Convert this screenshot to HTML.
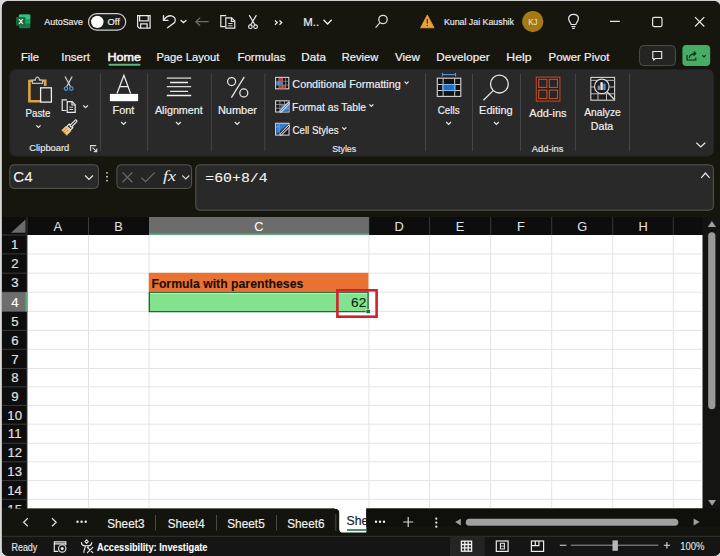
<!DOCTYPE html>
<html><head><meta charset="utf-8">
<style>
*{margin:0;padding:0}
html,body{width:720px;height:556px;overflow:hidden;background:#d9d9d9}
svg{position:absolute;left:0;top:0;display:block}
text{white-space:pre}
</style></head>
<body>
<svg width="720" height="556" viewBox="0 0 720 556">
<!-- window -->
<defs>
<clipPath id="win"><rect x="1.6" y="0.8" width="719" height="555.2" rx="7"/></clipPath>
<clipPath id="rowclip"><rect x="0" y="235" width="30" height="273.6"/></clipPath>
<clipPath id="tabclip"><rect x="339" y="500" width="27.3" height="40"/></clipPath>
</defs>
<rect x="0" y="0" width="720" height="556" fill="#dadada"/>
<g clip-path="url(#win)">
<rect x="1.6" y="0.8" width="740" height="570" fill="#16160f"/>
<!-- excel icon -->
<rect x="18.9" y="14.5" width="11.4" height="13.8" rx="1" fill="#107c41"/>
<rect x="18.9" y="14.5" width="11.4" height="4.6" rx="1" fill="#33c481"/>
<rect x="18.9" y="19" width="11.4" height="4.6" fill="#21a366"/>
<rect x="16.1" y="16.9" width="9.3" height="8.8" rx="1.2" fill="#1a6a3e"/>
<path d="M19 19 L22.8 24 M22.8 19 L19 24" stroke="#fff" stroke-width="1.2"/>
<!-- toggle -->
<rect x="88.5" y="13.7" width="37.2" height="16.4" rx="8.2" fill="#1b1b18" stroke="#d0d0d0" stroke-width="1.2"/>
<circle cx="97.3" cy="21.9" r="6.2" fill="#fff"/>
<!-- save -->
<g fill="none" stroke="#e8e8e8" stroke-width="1.25">
<path d="M137.6 15.6 H150.1 V28.1 H139.2 L137.6 26.5 Z"/>
<path d="M139.6 15.6 V20.8 H148.2 V15.6"/>
<path d="M140.6 28.1 V23.8 H147.1 V28.1"/>
</g>
<!-- undo -->
<g fill="none" stroke="#e8e8e8" stroke-width="1.3" stroke-linecap="round">
<path d="M163.5 15.6 V20.4 H168"/>
<path d="M163.8 20.2 C166 16.5 169 15.5 171.5 15.8 C174.5 16.3 176.5 19.5 174.6 22.6 L167.6 27.8"/>
<path d="M181 20.4 L183.5 22.6 L186 20.4"/>
</g>
<!-- back arrow -->
<path d="M208.7 21.7 H195.8 M200.2 17.6 L195.8 21.7 L200.2 25.8" fill="none" stroke="#6d6d68" stroke-width="1.2"/>
<!-- copy -->
<g fill="none" stroke="#e8e8e8" stroke-width="1.2">
<path d="M226.2 15.6 H220.8 V26.6 H225.4"/>
<path d="M225.8 17.8 H231.6 L234.8 21 V28.2 H225.8 Z"/>
<path d="M231.4 17.8 V21.3 H234.8"/>
<path d="M228.2 23.5 H232.6 M228.2 25.8 H232.6" stroke-width="0.9"/>
</g>
<!-- scissors -->
<g fill="none" stroke="#e8e8e8" stroke-width="1.2">
<path d="M249.2 15.1 L255 25 M256.4 15.1 L250.6 25"/>
<circle cx="250.4" cy="26.7" r="1.8"/><circle cx="255.6" cy="26.7" r="1.8"/>
</g>
<!-- >> -->
<path d="M275 20.5 L277.2 22.6 L275 24.7 M279.5 20.5 L281.7 22.6 L279.5 24.7" fill="none" stroke="#f0f0f0" stroke-width="1.3"/>
<!-- M.. chevron -->
<path d="M323.5 19.8 L327.6 24 L331.7 19.8" fill="none" stroke="#f0f0f0" stroke-width="1.3"/>
<!-- search -->
<g fill="none" stroke="#dcdcdc" stroke-width="1.25">
<circle cx="383" cy="19.5" r="4.2"/><path d="M380 22.6 L375.6 27.6"/>
</g>
<!-- warning -->
<path d="M427.3 14.9 L434.1 27.8 H420.6 Z" fill="#e9a23b" stroke="#e9a23b" stroke-width="0.8" stroke-linejoin="round"/>
<path d="M427.3 19 V23.6 M427.3 25 V26" stroke="#3b2a10" stroke-width="1.2"/>
<!-- avatar -->
<circle cx="532.8" cy="21.6" r="10.6" fill="#a57a14"/>
<!-- bulb -->
<g fill="none" stroke="#e8e8e8" stroke-width="1.2">
<path d="M571.2 24.5 C571 22.5 568.6 21.6 568.6 18.6 C568.6 15.8 570.8 14.4 573.5 14.4 C576.2 14.4 578.4 15.8 578.4 18.6 C578.4 21.6 576 22.5 575.8 24.5 Z"/>
<path d="M571.4 26.5 H575.6 M572.2 28.4 H574.8"/>
</g>
<!-- window controls -->
<path d="M610 21.3 H619.8" stroke="#e8e8e8" stroke-width="1.2"/>
<rect x="652.6" y="17.4" width="9.4" height="9.2" rx="1.5" fill="none" stroke="#e8e8e8" stroke-width="1.2"/>
<path d="M695 17.2 L704.3 26.5 M704.3 17.2 L695 26.5" stroke="#e8e8e8" stroke-width="1.2"/>
<!-- tabs underline -->
<rect x="108.5" y="63.7" width="32" height="2" rx="1" fill="#5bb77a"/>
<!-- comment / share -->
<rect x="639.6" y="45.6" width="35.8" height="20" rx="4" fill="#242422" stroke="#4e4e4a" stroke-width="1"/>
<path d="M652.8 51.5 H661.7 V58.5 H655.6 L653.6 60 V58.5 H652.8 Z" fill="none" stroke="#e8e8e8" stroke-width="1.1"/>
<rect x="682.4" y="45.1" width="27.8" height="20.8" rx="4" fill="#45ad66"/>
<g fill="none" stroke="#0f2a17" stroke-width="1.2">
<path d="M687 55 V60 H695.8 V57.5"/>
<path d="M689.3 58 C689.6 54.8 691.5 53.6 695.6 53.6 M693.6 51.5 L695.8 53.6 L693.6 55.7"/>
<path d="M702.3 55.2 L704 56.9 L705.7 55.2"/>
</g>
<!-- ribbon panel -->
<rect x="9.6" y="69.3" width="704.2" height="86.9" rx="6" fill="#292929" stroke="#202020" stroke-width="0.6"/>
<g stroke="#454545" stroke-width="1">
<path d="M100.5 73.5 V151 M147.5 73.5 V151 M211.3 73.5 V151 M264.8 73.5 V151 M425.5 73.5 V151 M472.5 73.5 V151 M520.5 73.5 V151 M575.4 73.5 V151 M629.5 73.5 V151"/>
</g>
<!-- paste icon -->
<path d="M30 80.8 H45.2 V86 M29.4 79.8 V101.3 H40" fill="none" stroke="#e3a23c" stroke-width="2.6"/>
<path d="M32.4 83.4 V81.2 Q32.4 80.2 33.4 80.2 H35.3 Q35.6 77.2 37.4 77.2 Q39.2 77.2 39.5 80.2 H41.6 Q42.6 80.2 42.6 81.2 V83.4 Z" fill="#2a2a2a" stroke="#bdbdbd" stroke-width="1.2"/>
<rect x="40.6" y="87.8" width="10.8" height="14.3" fill="#2a2a2a" stroke="#ececec" stroke-width="1.3"/>
<!-- scissors ribbon -->
<g fill="none" stroke-width="1.2">
<path d="M65 76.5 L70.6 86.8 M72.2 76.5 L66.6 86.8" stroke="#d8d8d8"/>
<circle cx="66" cy="88.6" r="1.7" stroke="#4a97db"/><circle cx="71.3" cy="88.6" r="1.7" stroke="#4a97db"/>
</g>
<!-- copy ribbon -->
<g fill="none" stroke="#e8e8e8" stroke-width="1.2">
<path d="M67 99.8 H62.2 V110.5 H66.4"/>
<path d="M67.2 101.7 H72.2 L75.2 104.7 V112.4 H67.2 Z"/>
<path d="M72 101.7 V105 H75.2"/>
<path d="M69.4 107.2 H73 M69.4 109.5 H73" stroke-width="0.9"/>
</g>
<path d="M83.3 105.3 L85.6 107.6 L87.9 105.3" fill="none" stroke="#e8e8e8" stroke-width="1.2"/>
<!-- format painter -->
<g transform="translate(0.6 -0.9)">
<path d="M61.2 131.2 L65.4 127 L70.4 132 L66.2 136.2 Z" fill="#f2c886" stroke="#e3a23c" stroke-width="1"/>
<path d="M62.6 132.6 L66 129.2 M64.2 134.2 L67.6 130.8" stroke="#b57a26" stroke-width="0.8"/>
<path d="M66.3 127.2 L68.6 124.9 L72.3 128.6 L70 130.9 Z" fill="#292929" stroke="#ececec" stroke-width="1.1"/>
<path d="M70.6 126.6 L75.2 122" stroke="#ececec" stroke-width="3.4" stroke-linecap="round"/>
<path d="M70.6 126.6 L75.2 122" stroke="#292929" stroke-width="1.1" stroke-linecap="round"/>
</g>
<!-- paste chevron -->
<path d="M36.2 125.3 L38.4 127.5 L40.6 125.3" fill="none" stroke="#e8e8e8" stroke-width="1.2"/>
<!-- dialog launcher -->
<path d="M90.6 151 V145.6 H96.2 M92.6 147.6 L96.8 151.6 M93.8 151.6 H96.8 V148.6" fill="none" stroke="#d8d8d8" stroke-width="1.1"/>
<!-- font icon -->
<path d="M117 93.5 L123.9 75.3 L130.6 93.5 M120 86.7 H127.8" fill="none" stroke="#ececec" stroke-width="1.25"/>
<rect x="109.9" y="93.9" width="28.2" height="7.3" fill="#fdfdfd"/>
<!-- alignment -->
<g stroke-width="1.3">
<path d="M166.8 78.1 H191.2" stroke="#a8a8a8" stroke-width="1.9"/>
<path d="M170.1 82.5 H188" stroke="#f0f0f0"/>
<path d="M166.8 86.7 H191.2" stroke="#d8d8d8"/>
<path d="M170.1 91.4 H188" stroke="#e8e8e8"/>
<path d="M166.8 95.5 H191.2" stroke="#f0f0f0"/>
</g>
<!-- percent -->
<g fill="none" stroke="#e8e8e8" stroke-width="1.25">
<circle cx="231.6" cy="81.6" r="4"/><circle cx="243.8" cy="92.9" r="4"/>
<path d="M244.3 76.9 L231.4 97.6"/>
</g>
<!-- chevrons under font/alignment/number/cells/editing -->
<g fill="none" stroke="#e8e8e8" stroke-width="1.2">
<path d="M121.2 122 L123.6 124.4 L126 122"/>
<path d="M176 122 L178.4 124.4 L180.8 122"/>
<path d="M234.8 122 L237.2 124.4 L239.6 122"/>
<path d="M446.2 122 L448.6 124.4 L451 122"/>
<path d="M494 122 L496.4 124.4 L498.8 122"/>
<path d="M404.6 81.6 L406.6 83.6 L408.6 81.6"/>
<path d="M369.4 104.4 L371.4 106.4 L373.4 104.4"/>
<path d="M342.3 127.4 L344.3 129.4 L346.3 127.4"/>
<path d="M696.4 142.8 L700.8 147 L705.2 142.8"/>
</g>
<!-- conditional formatting icon -->
<rect x="275.6" y="77.4" width="13.2" height="11.4" fill="#141414" stroke="#d4d4d4" stroke-width="1.1"/>
<rect x="279" y="78" width="3.4" height="3.1" fill="#e03030"/>
<rect x="276.2" y="81.6" width="6.2" height="3.2" fill="#3b86d6"/>
<rect x="279" y="85.3" width="6.6" height="3" fill="#e02828"/>
<path d="M275.6 81.3 H288.8 M275.6 85 H288.8 M278.9 77.4 V88.8 M282.3 77.4 V88.8 M285.6 77.4 V88.8" stroke="#9a9a9a" stroke-width="0.7"/>
<!-- format as table icon -->
<rect x="275.6" y="100.8" width="13.4" height="11.2" fill="#161616" stroke="#d4d4d4" stroke-width="1.1"/>
<path d="M280.2 104.4 H288.5 V111.5 H283.6 Z" fill="#2f7ed8"/>
<path d="M275.6 104.4 H289 M275.6 108.2 H289 M279.9 100.8 V112 M284.5 100.8 V104.4" stroke="#a8a8a8" stroke-width="0.8"/>
<path d="M280.8 111.2 L288.4 103.6" stroke="#eeeeee" stroke-width="2.8" stroke-linecap="round"/>
<path d="M280.8 111.2 L288.4 103.6" stroke="#2f7ed8" stroke-width="1.1" stroke-linecap="round"/>
<!-- cell styles icon -->
<rect x="275.6" y="123.3" width="13.4" height="11.8" fill="#161616" stroke="#d4d4d4" stroke-width="1.1"/>
<path d="M276.2 123.9 H288.4 L276.2 134.5 Z" fill="#2f7ed8"/>
<path d="M279.2 123.3 V135.1 M275.6 126.8 H279.2" stroke="#8aa8c8" stroke-width="0.8"/>
<path d="M281 134.2 L288.5 126.6" stroke="#eeeeee" stroke-width="2.8" stroke-linecap="round"/>
<path d="M281 134.2 L288.5 126.6" stroke="#1b1b1b" stroke-width="1.1" stroke-linecap="round"/>
<!-- cells icon -->
<rect x="437.3" y="78.2" width="23.5" height="18.2" fill="#121212" stroke="#d8d8d8" stroke-width="1.1"/>
<rect x="443.1" y="84.5" width="11.6" height="6" fill="#1d6fc4" stroke="#77b8ef" stroke-width="1"/>
<path d="M443.1 78.2 V96.4 M454.7 78.2 V96.4 M437.3 84.5 H460.8 M437.3 90.5 H460.8" stroke="#c8c8c8" stroke-width="1"/>
<rect x="443.1" y="84.5" width="11.6" height="6" fill="#1d6fc4" stroke="#77b8ef" stroke-width="1"/>
<path d="M442.4 74.6 H455.6 M442.4 72.8 V76.4 M455.6 72.8 V76.4" stroke="#5aa3e6" stroke-width="1"/>
<!-- editing magnifier -->
<g fill="none" stroke="#e4e4e4" stroke-width="1.3">
<circle cx="499.4" cy="84.1" r="8.9"/>
<path d="M493.2 90.6 L483.4 100.2"/>
</g>
<!-- add-ins icon -->
<rect x="536.3" y="77.1" width="23.6" height="24" fill="#2e1a14" stroke="#b94c28" stroke-width="1.1"/>
<rect x="538.7" y="79.3" width="8.2" height="8.1" fill="#25252b" stroke="#c2542d" stroke-width="1.1"/>
<rect x="549.3" y="79.3" width="8.2" height="8.1" fill="#25252b" stroke="#c2542d" stroke-width="1.1"/>
<rect x="538.7" y="90.1" width="8.2" height="8.5" fill="#25252b" stroke="#c2542d" stroke-width="1.1"/>
<rect x="549.3" y="90.1" width="8.2" height="8.5" fill="#25252b" stroke="#c2542d" stroke-width="1.1"/>
<!-- analyze data icon -->
<rect x="590.8" y="77.4" width="23.8" height="22.8" fill="#1c1c1c" stroke="#d4d4d4" stroke-width="1.1"/>
<path d="M590.8 80.3 H614.6 M590.8 93.8 H614.6 M598 93.8 V100.2 M606.5 93.8 V100.2 M590.8 87 H594 M609.6 87 H614.6" stroke="#bdbdbd" stroke-width="1"/>
<circle cx="601.8" cy="86.4" r="7.3" fill="#1c1c1c" stroke="#dadada" stroke-width="1.2"/>
<path d="M607 91.8 L614.6 99.8" stroke="#dadada" stroke-width="1.3"/>
<rect x="597.6" y="85.6" width="2.4" height="4.4" fill="#8c8c8c"/>
<rect x="600.4" y="82.2" width="2.4" height="7.8" fill="#ececec"/>
<rect x="603.2" y="83.6" width="2.4" height="6.4" fill="#3f95e6"/>
<!-- formula bar -->
<rect x="9.8" y="164.8" width="88.6" height="23.6" rx="4" fill="#292929" stroke="#575753" stroke-width="1"/>
<path d="M85.1 175.5 L89 179.4 L92.9 175.5" fill="none" stroke="#e8e8e8" stroke-width="1.2"/>
<g fill="#d8d8d8"><circle cx="107" cy="172.8" r="0.9"/><circle cx="107" cy="176.7" r="0.9"/><circle cx="107" cy="180.6" r="0.9"/></g>
<rect x="116.9" y="164.8" width="74.7" height="23.6" rx="4" fill="#252525" stroke="#575753" stroke-width="1"/>
<path d="M122.5 172.4 L132.4 182.2 M132.4 172.4 L122.5 182.2" stroke="#6c6c6c" stroke-width="1.2"/>
<path d="M141.4 177.6 L145.6 181.6 L154.8 172.4" fill="none" stroke="#6c6c6c" stroke-width="1.2"/>
<path d="M182.3 175.5 L185.8 179 L189.3 175.5" fill="none" stroke="#d8d8d8" stroke-width="1.1"/>
<rect x="195.8" y="164.8" width="517.6" height="45.4" rx="4" fill="#292929" stroke="#575753" stroke-width="1"/>
<path d="M701.2 177.8 L705.4 173 L709.6 177.8" fill="none" stroke="#e8e8e8" stroke-width="1.2"/>
<!-- grid -->
<rect x="2" y="217" width="701" height="18" fill="#0d0d0d"/>
<rect x="2" y="235" width="25" height="273.6" fill="#0d0d0d"/>
<rect x="27" y="235" width="675.7" height="273.6" fill="#ffffff"/>
<g stroke="#e4e4e4" stroke-width="1">
<path d="M27 253.9 H702.7 M27 273.2 H702.7 M27 292.2 H702.7 M27 311.4 H702.7 M27 330.4 H702.7 M27 349.3 H702.7 M27 368.5 H702.7 M27 386.8 H702.7 M27 405.4 H702.7 M27 424.2 H702.7 M27 443.3 H702.7 M27 461.8 H702.7 M27 480.6 H702.7 M27 499.4 H702.7"/>
<path d="M88.5 235 V508.6 M149 235 V508.6 M368.9 235 V508.6 M429.6 235 V508.6 M490.7 235 V508.6 M551.7 235 V508.6 M612.7 235 V508.6 M673.3 235 V508.6"/>
</g>
<g stroke="#3a3a3a" stroke-width="1">
<path d="M88.5 217 V235 M368.9 217 V235 M429.6 217 V235 M490.7 217 V235 M551.7 217 V235 M612.7 217 V235 M673.3 217 V235"/>
<path d="M27 217 V508.6"/>
<path d="M2 235 H27 M2 253.9 H27 M2 273.2 H27 M2 292.2 H27 M2 311.4 H27 M2 330.4 H27 M2 349.3 H27 M2 368.5 H27 M2 386.8 H27 M2 405.4 H27 M2 424.2 H27 M2 443.3 H27 M2 461.8 H27 M2 480.6 H27 M2 499.4 H27"/>
</g>
<!-- select all triangle -->
<path d="M11 232.8 L25.5 219.4 V232.8 Z" fill="#6b6b6b"/>
<!-- selected headers -->
<rect x="149" y="217" width="219.9" height="18" fill="#6c6c6c"/>
<rect x="149" y="233.4" width="219.9" height="1.6" fill="#5aa97a"/>
<rect x="2" y="292.2" width="25" height="19.2" fill="#6e6e6e"/>
<rect x="25.4" y="292.2" width="1.6" height="19.2" fill="#5aa97a"/>
<!-- cells -->
<rect x="148.8" y="272.8" width="219.6" height="19" fill="#e97132"/>
<rect x="148.8" y="291.8" width="219.6" height="20.2" fill="#83e28e"/>
<rect x="149.3" y="292.3" width="218.8" height="19.4" fill="none" stroke="#1e4a2c" stroke-width="1.1"/>
<path d="M150.3 293.4 H367.2" stroke="#c9f2cd" stroke-width="0.9"/>
<rect x="366" y="309.4" width="4.4" height="4" fill="#1f6b3c" stroke="#fff" stroke-width="0.6"/>
<rect x="337.4" y="290.3" width="39.2" height="26.4" fill="none" stroke="#d2212b" stroke-width="2.6"/>
<!-- vertical scrollbar -->
<rect x="702.7" y="217" width="20" height="291.9" fill="#141413"/>
<path d="M707.8 227 L711.9 221 L716 227 Z" fill="#a0a0a0"/>
<rect x="708.2" y="232.2" width="7.2" height="177" rx="3.6" fill="#9a9a9a"/>
<path d="M708.2 500.1 L712.1 505.8 L716 500.1 Z" fill="#a0a0a0"/>
<!-- tab bar -->
<rect x="2" y="508.6" width="740" height="28" fill="#14140f"/>
<path d="M334.6 508 H366.3 V532.6 H343.4 Q339.2 532.6 339.2 528.4 V512.8 Q339.2 508.7 334.6 508.7 Z" fill="#ffffff"/>
<rect x="347" y="529.2" width="19.3" height="1.6" fill="#217346"/>
<rect x="366.3" y="508.7" width="380" height="18" fill="#0f0f0c"/>
<g fill="none" stroke="#e0e0e0" stroke-width="1.2">
<path d="M27.8 518.2 L23.6 522.2 L27.8 526.2"/>
<path d="M52 518.2 L56.2 522.2 L52 526.2"/>
</g>
<g fill="#e8e8e8"><circle cx="77.5" cy="521.8" r="1.2"/><circle cx="81.6" cy="521.8" r="1.2"/><circle cx="85.7" cy="521.8" r="1.2"/>
<circle cx="376" cy="521.7" r="1.2"/><circle cx="380" cy="521.7" r="1.2"/><circle cx="384" cy="521.7" r="1.2"/>
<circle cx="436.3" cy="518.7" r="1.1"/><circle cx="436.3" cy="522.7" r="1.1"/><circle cx="436.3" cy="526.7" r="1.1"/></g>
<path d="M408.2 517 V527 M403.2 522 H413.2" stroke="#d8d8d8" stroke-width="1.2"/>
<g stroke="#4a4a46" stroke-width="1">
<path d="M155.5 515 V530.4 M216.5 515 V530.4 M276.5 515 V530.4 M335.8 514 V530.8"/>
</g>
<path d="M460.8 518.8 L455.2 522.1 L460.8 525.4 Z" fill="#a0a0a0"/>
<rect x="465.8" y="518.8" width="212.5" height="7" rx="3.5" fill="#a0a0a0"/>
<path d="M693.6 518.6 L699.6 522.1 L693.6 525.6 Z" fill="#a0a0a0"/>
<!-- status bar -->
<rect x="2" y="536.2" width="740" height="30" fill="#151515"/>
<rect x="2" y="535.8" width="740" height="1.2" fill="#2c2c28"/>
<g fill="none" stroke="#e8e8e8" stroke-width="1.15">
<path d="M58.2 551.4 H54.3 V541.9 H65.8 V545.2 M54.3 543.9 H65.8"/>
<circle cx="62.2" cy="548.4" r="3.7"/>
</g>
<circle cx="62.2" cy="548.4" r="1.5" fill="#e8e8e8"/>
<g fill="none" stroke="#e8e8e8" stroke-width="1.15" stroke-linecap="round" stroke-linejoin="round">
<path d="M86.6 539.9 L88.3 541.6 L86.6 543.3 L84.9 541.6 Z"/>
<path d="M81.4 542.6 Q81.8 545.9 85 545.7 H88.2 Q91.4 545.9 91.8 542.6"/>
<path d="M85.2 545.9 C85.6 548.6 83.4 549.8 83.9 552.4 M88 545.9 L88.2 547.6"/>
<path d="M87.4 547.4 L92.8 552.6 M92.8 547.4 L87.4 552.6"/>
</g>
<rect x="450" y="536.8" width="34.6" height="20" fill="#242424"/>
<g fill="none" stroke="#f0f0f0" stroke-width="1.3">
<rect x="461.4" y="541.2" width="10.2" height="10"/>
<path d="M464.8 541.2 V551.2 M468.2 541.2 V551.2 M461.4 544.5 H471.6 M461.4 547.9 H471.6"/>
</g>
<g fill="none" stroke="#ececec" stroke-width="1.2">
<rect x="496.3" y="541" width="11.8" height="10.4"/>
<rect x="500.4" y="543.3" width="4" height="5.6" stroke-width="1"/>
<path d="M500.4 546.1 H504.4" stroke-width="0.8"/>
<rect x="531.4" y="541" width="12.2" height="10.4"/>
<path d="M531.4 545.6 H538.9 V541 M535.3 541 V545.6"/>
</g>
<g fill="none" stroke="#e0e0e0" stroke-width="1.1">
<path d="M559.8 545.2 H566.4 M663.8 545.2 H670 M666.9 542 V548.4"/>
</g>
<path d="M570.8 545.2 H658.3" stroke="#9a9a9a" stroke-width="1"/>
<rect x="612.5" y="540.4" width="5.4" height="10.4" fill="#b8b8b8"/>
<g><text transform="translate(44.36 25.25) scale(0.996 1)" style='font-family:"Liberation Sans";font-size:8.93px;font-weight:normal;' fill="#e8e8e8" stroke="#e8e8e8" stroke-width="0.18">AutoSave</text></g>
<g><text transform="translate(107.48 25.00) scale(1.082 1)" style='font-family:"Liberation Sans";font-size:8.62px;font-weight:normal;' fill="#f0f0f0" stroke="#f0f0f0" stroke-width="0.18">Off</text></g>
<g><text transform="translate(303.29 25.60) scale(1.077 1)" style='font-family:"Liberation Sans";font-size:10.58px;font-weight:normal;' fill="#f0f0f0" stroke="#f0f0f0" stroke-width="0.18">M..</text></g>
<g><text transform="translate(443.89 25.30) scale(0.956 1)" style='font-family:"Liberation Sans";font-size:9.24px;font-weight:normal;' fill="#e8e8e8" stroke="#e8e8e8" stroke-width="0.18">Kunal Jai Kaushik</text></g>
<g><text transform="translate(528.27 25.00) scale(0.892 1)" style='font-family:"Liberation Sans";font-size:8.84px;font-weight:normal;' fill="#f5e8c8" stroke="#f5e8c8" stroke-width="0">KJ</text></g>
<g><text transform="translate(21.01 60.90) scale(1.039 1)" style='font-family:"Liberation Sans";font-size:10.76px;font-weight:normal;' fill="#f2f2f2" stroke="#f2f2f2" stroke-width="0.18">File</text></g>
<g><text transform="translate(61.27 60.90) scale(1.015 1)" style='font-family:"Liberation Sans";font-size:11.30px;font-weight:normal;' fill="#f2f2f2" stroke="#f2f2f2" stroke-width="0.18">Insert</text></g>
<g><text transform="translate(107.49 60.90) scale(1.112 1)" style='font-family:"Liberation Sans";font-size:11.30px;font-weight:normal;' fill="#f2f2f2" stroke="#f2f2f2" stroke-width="0.55">Home</text></g>
<g><text transform="translate(156.40 60.90) scale(0.992 1)" style='font-family:"Liberation Sans";font-size:11.30px;font-weight:normal;' fill="#f2f2f2" stroke="#f2f2f2" stroke-width="0.18">Page Layout</text></g>
<g><text transform="translate(237.38 60.90) scale(1.072 1)" style='font-family:"Liberation Sans";font-size:10.76px;font-weight:normal;' fill="#f2f2f2" stroke="#f2f2f2" stroke-width="0.18">Formulas</text></g>
<g><text transform="translate(301.37 60.90) scale(1.030 1)" style='font-family:"Liberation Sans";font-size:11.30px;font-weight:normal;' fill="#f2f2f2" stroke="#f2f2f2" stroke-width="0.18">Data</text></g>
<g><text transform="translate(341.81 60.90) scale(1.034 1)" style='font-family:"Liberation Sans";font-size:10.76px;font-weight:normal;' fill="#f2f2f2" stroke="#f2f2f2" stroke-width="0.18">Review</text></g>
<g><text transform="translate(394.94 60.90) scale(1.083 1)" style='font-family:"Liberation Sans";font-size:10.76px;font-weight:normal;' fill="#f2f2f2" stroke="#f2f2f2" stroke-width="0.18">View</text></g>
<g><text transform="translate(436.37 60.90) scale(1.084 1)" style='font-family:"Liberation Sans";font-size:10.76px;font-weight:normal;' fill="#f2f2f2" stroke="#f2f2f2" stroke-width="0.18">Developer</text></g>
<g><text transform="translate(506.32 60.90) scale(1.138 1)" style='font-family:"Liberation Sans";font-size:10.76px;font-weight:normal;' fill="#f2f2f2" stroke="#f2f2f2" stroke-width="0.18">Help</text></g>
<g><text transform="translate(548.59 60.90) scale(1.062 1)" style='font-family:"Liberation Sans";font-size:10.76px;font-weight:normal;' fill="#f2f2f2" stroke="#f2f2f2" stroke-width="0.18">Power Pivot</text></g>
<g><text transform="translate(25.62 117.00) scale(0.929 1)" style='font-family:"Liberation Sans";font-size:10.43px;font-weight:normal;' fill="#f0f0f0" stroke="#f0f0f0" stroke-width="0.18">Paste</text></g>
<g><text transform="translate(29.28 151.25) scale(0.991 1)" style='font-family:"Liberation Sans";font-size:9.45px;font-weight:normal;' fill="#e6e6e6" stroke="#e6e6e6" stroke-width="0.18">Clipboard</text></g>
<g><text transform="translate(112.53 114.00) scale(1.032 1)" style='font-family:"Liberation Sans";font-size:10.58px;font-weight:normal;' fill="#f0f0f0" stroke="#f0f0f0" stroke-width="0.18">Font</text></g>
<g><text transform="translate(154.95 114.00) scale(1.070 1)" style='font-family:"Liberation Sans";font-size:10.07px;font-weight:normal;' fill="#f0f0f0" stroke="#f0f0f0" stroke-width="0.18">Alignment</text></g>
<g><text transform="translate(217.92 114.00) scale(1.091 1)" style='font-family:"Liberation Sans";font-size:10.07px;font-weight:normal;' fill="#f0f0f0" stroke="#f0f0f0" stroke-width="0.18">Number</text></g>
<g><text transform="translate(292.36 87.60) scale(0.942 1)" style='font-family:"Liberation Sans";font-size:11.45px;font-weight:normal;' fill="#f0f0f0" stroke="#f0f0f0" stroke-width="0.18">Conditional Formatting</text></g>
<g><text transform="translate(292.07 110.50) scale(0.904 1)" style='font-family:"Liberation Sans";font-size:11.45px;font-weight:normal;' fill="#f0f0f0" stroke="#f0f0f0" stroke-width="0.18">Format as Table</text></g>
<g><text transform="translate(292.41 133.50) scale(0.844 1)" style='font-family:"Liberation Sans";font-size:11.59px;font-weight:normal;' fill="#f0f0f0" stroke="#f0f0f0" stroke-width="0.18">Cell Styles</text></g>
<g><text transform="translate(332.20 151.90) scale(0.912 1)" style='font-family:"Liberation Sans";font-size:9.66px;font-weight:normal;' fill="#e6e6e6" stroke="#e6e6e6" stroke-width="0.18">Styles</text></g>
<g><text transform="translate(437.81 114.40) scale(0.946 1)" style='font-family:"Liberation Sans";font-size:10.34px;font-weight:normal;' fill="#f0f0f0" stroke="#f0f0f0" stroke-width="0.18">Cells</text></g>
<g><text transform="translate(479.12 114.40) scale(1.061 1)" style='font-family:"Liberation Sans";font-size:10.34px;font-weight:normal;' fill="#f0f0f0" stroke="#f0f0f0" stroke-width="0.18">Editing</text></g>
<g><text transform="translate(529.35 116.70) scale(1.018 1)" style='font-family:"Liberation Sans";font-size:10.76px;font-weight:normal;' fill="#f0f0f0" stroke="#f0f0f0" stroke-width="0.18">Add-ins</text></g>
<g><text transform="translate(531.85 151.50) scale(1.008 1)" style='font-family:"Liberation Sans";font-size:9.24px;font-weight:normal;' fill="#e6e6e6" stroke="#e6e6e6" stroke-width="0.18">Add-ins</text></g>
<g><text transform="translate(584.15 115.80) scale(0.997 1)" style='font-family:"Liberation Sans";font-size:10.34px;font-weight:normal;' fill="#f0f0f0" stroke="#f0f0f0" stroke-width="0.18">Analyze</text></g>
<g><text transform="translate(590.85 129.60) scale(1.032 1)" style='font-family:"Liberation Sans";font-size:10.29px;font-weight:normal;' fill="#f0f0f0" stroke="#f0f0f0" stroke-width="0.18">Data</text></g>
<g><text transform="translate(13.14 182.00) scale(1.026 1)" style='font-family:"Liberation Sans";font-size:14.86px;font-weight:normal;' fill="#f4f4f4" stroke="#f4f4f4" stroke-width="0.05">C4</text></g>
<g><text transform="translate(163.02 180.70) scale(1.208 1)" style='font-family:"Liberation Serif";font-size:15.04px;font-weight:normal;font-style:italic;' fill="#f0f0f0" stroke="#f0f0f0" stroke-width="0">fx</text></g>
<g><text transform="translate(205.28 181.90) scale(1.157 1)" style='font-family:"Liberation Mono";font-size:12.83px;font-weight:normal;' fill="#f4f4f4" stroke="#f4f4f4" stroke-width="0.1">=60+8/4</text></g>
<g><text transform="translate(53.46 231.00) scale(1.000 1)" style='font-family:"Liberation Sans";font-size:12.80px;font-weight:normal;' fill="#e0e0e0" stroke="#e0e0e0" stroke-width="0.05">A</text></g>
<g><text transform="translate(114.30 231.00) scale(1.000 1)" style='font-family:"Liberation Sans";font-size:12.80px;font-weight:normal;' fill="#e0e0e0" stroke="#e0e0e0" stroke-width="0.05">B</text></g>
<g><text transform="translate(254.25 231.00) scale(1.000 1)" style='font-family:"Liberation Sans";font-size:12.80px;font-weight:normal;' fill="#ffffff" stroke="#ffffff" stroke-width="0.05">C</text></g>
<g><text transform="translate(394.42 231.00) scale(1.000 1)" style='font-family:"Liberation Sans";font-size:12.80px;font-weight:normal;' fill="#e0e0e0" stroke="#e0e0e0" stroke-width="0.05">D</text></g>
<g><text transform="translate(455.64 231.00) scale(1.000 1)" style='font-family:"Liberation Sans";font-size:12.80px;font-weight:normal;' fill="#e0e0e0" stroke="#e0e0e0" stroke-width="0.05">E</text></g>
<g><text transform="translate(517.04 231.00) scale(1.000 1)" style='font-family:"Liberation Sans";font-size:12.80px;font-weight:normal;' fill="#e0e0e0" stroke="#e0e0e0" stroke-width="0.05">F</text></g>
<g><text transform="translate(577.37 231.00) scale(1.000 1)" style='font-family:"Liberation Sans";font-size:12.80px;font-weight:normal;' fill="#e0e0e0" stroke="#e0e0e0" stroke-width="0.05">G</text></g>
<g><text transform="translate(638.39 231.00) scale(1.000 1)" style='font-family:"Liberation Sans";font-size:12.80px;font-weight:normal;' fill="#e0e0e0" stroke="#e0e0e0" stroke-width="0.05">H</text></g>
<g clip-path="url(#rowclip)"><text transform="translate(11.04 249.15) scale(1.000 1)" style='font-family:"Liberation Sans";font-size:13.20px;font-weight:normal;' fill="#e0e0e0" stroke="#e0e0e0" stroke-width="0.18">1</text></g>
<g clip-path="url(#rowclip)"><text transform="translate(11.24 268.25) scale(1.000 1)" style='font-family:"Liberation Sans";font-size:13.20px;font-weight:normal;' fill="#e0e0e0" stroke="#e0e0e0" stroke-width="0.18">2</text></g>
<g clip-path="url(#rowclip)"><text transform="translate(11.27 287.40) scale(1.000 1)" style='font-family:"Liberation Sans";font-size:13.20px;font-weight:normal;' fill="#e0e0e0" stroke="#e0e0e0" stroke-width="0.18">3</text></g>
<g clip-path="url(#rowclip)"><text transform="translate(11.30 306.50) scale(1.000 1)" style='font-family:"Liberation Sans";font-size:13.20px;font-weight:normal;' fill="#ffffff" stroke="#ffffff" stroke-width="0.18">4</text></g>
<g clip-path="url(#rowclip)"><text transform="translate(11.24 325.60) scale(1.000 1)" style='font-family:"Liberation Sans";font-size:13.20px;font-weight:normal;' fill="#e0e0e0" stroke="#e0e0e0" stroke-width="0.18">5</text></g>
<g clip-path="url(#rowclip)"><text transform="translate(11.17 344.55) scale(1.000 1)" style='font-family:"Liberation Sans";font-size:13.20px;font-weight:normal;' fill="#e0e0e0" stroke="#e0e0e0" stroke-width="0.18">6</text></g>
<g clip-path="url(#rowclip)"><text transform="translate(11.24 363.60) scale(1.000 1)" style='font-family:"Liberation Sans";font-size:13.20px;font-weight:normal;' fill="#e0e0e0" stroke="#e0e0e0" stroke-width="0.18">7</text></g>
<g clip-path="url(#rowclip)"><text transform="translate(11.20 382.35) scale(1.000 1)" style='font-family:"Liberation Sans";font-size:13.20px;font-weight:normal;' fill="#e0e0e0" stroke="#e0e0e0" stroke-width="0.18">8</text></g>
<g clip-path="url(#rowclip)"><text transform="translate(11.24 400.80) scale(1.000 1)" style='font-family:"Liberation Sans";font-size:13.20px;font-weight:normal;' fill="#e0e0e0" stroke="#e0e0e0" stroke-width="0.18">9</text></g>
<g clip-path="url(#rowclip)"><text transform="translate(7.31 419.50) scale(1.000 1)" style='font-family:"Liberation Sans";font-size:13.20px;font-weight:normal;' fill="#e0e0e0" stroke="#e0e0e0" stroke-width="0.18">10</text></g>
<g clip-path="url(#rowclip)"><text transform="translate(7.87 438.45) scale(1.000 1)" style='font-family:"Liberation Sans";font-size:13.20px;font-weight:normal;' fill="#e0e0e0" stroke="#e0e0e0" stroke-width="0.18">11</text></g>
<g clip-path="url(#rowclip)"><text transform="translate(7.38 457.25) scale(1.000 1)" style='font-family:"Liberation Sans";font-size:13.20px;font-weight:normal;' fill="#e0e0e0" stroke="#e0e0e0" stroke-width="0.18">12</text></g>
<g clip-path="url(#rowclip)"><text transform="translate(7.34 475.90) scale(1.000 1)" style='font-family:"Liberation Sans";font-size:13.20px;font-weight:normal;' fill="#e0e0e0" stroke="#e0e0e0" stroke-width="0.18">13</text></g>
<g clip-path="url(#rowclip)"><text transform="translate(7.24 494.70) scale(1.000 1)" style='font-family:"Liberation Sans";font-size:13.20px;font-weight:normal;' fill="#e0e0e0" stroke="#e0e0e0" stroke-width="0.18">14</text></g>
<g clip-path="url(#rowclip)"><text transform="translate(7.34 513.55) scale(1.000 1)" style='font-family:"Liberation Sans";font-size:13.20px;font-weight:normal;' fill="#e0e0e0" stroke="#e0e0e0" stroke-width="0.18">15</text></g>
<g><text transform="translate(151.40 287.60) scale(0.946 1)" style='font-family:"Liberation Sans";font-size:12.97px;font-weight:bold;' fill="#1a0d05" stroke="#1a0d05" stroke-width="0.08">Formula with parentheses</text></g>
<g><text transform="translate(351.12 307.30) scale(1.012 1)" style='font-family:"Liberation Sans";font-size:13.43px;font-weight:normal;' fill="#0b1d10" stroke="#0b1d10" stroke-width="0.1">62</text></g>
<g><text transform="translate(107.17 527.90) scale(0.934 1)" style='font-family:"Liberation Sans";font-size:12.62px;font-weight:normal;' fill="#f0f0f0" stroke="#f0f0f0" stroke-width="0.18">Sheet3</text></g>
<g><text transform="translate(167.78 527.90) scale(0.922 1)" style='font-family:"Liberation Sans";font-size:12.62px;font-weight:normal;' fill="#f0f0f0" stroke="#f0f0f0" stroke-width="0.18">Sheet4</text></g>
<g><text transform="translate(227.17 527.90) scale(0.940 1)" style='font-family:"Liberation Sans";font-size:12.62px;font-weight:normal;' fill="#f0f0f0" stroke="#f0f0f0" stroke-width="0.18">Sheet5</text></g>
<g><text transform="translate(287.17 527.90) scale(0.934 1)" style='font-family:"Liberation Sans";font-size:12.62px;font-weight:normal;' fill="#f0f0f0" stroke="#f0f0f0" stroke-width="0.18">Sheet6</text></g>
<g clip-path="url(#tabclip)"><text transform="translate(346.45 525.20) scale(1.000 1)" style='font-family:"Liberation Sans";font-size:12.28px;font-weight:normal;' fill="#1a1a1a" stroke="#1a1a1a" stroke-width="0.18">Sheet7</text></g>
<g><text transform="translate(11.49 550.90) scale(0.863 1)" style='font-family:"Liberation Sans";font-size:10.34px;font-weight:normal;' fill="#e0e0e0" stroke="#e0e0e0" stroke-width="0.18">Ready</text></g>
<g><text transform="translate(96.97 550.90) scale(0.872 1)" style='font-family:"Liberation Sans";font-size:10.62px;font-weight:bold;' fill="#ffffff" stroke="#ffffff" stroke-width="0.08">Accessibility: Investigate</text></g>
<g><text transform="translate(680.29 550.00) scale(0.921 1)" style='font-family:"Liberation Sans";font-size:10.29px;font-weight:normal;' fill="#e8e8e8" stroke="#e8e8e8" stroke-width="0.08">100%</text></g>
</g>
</svg>
</body></html>
